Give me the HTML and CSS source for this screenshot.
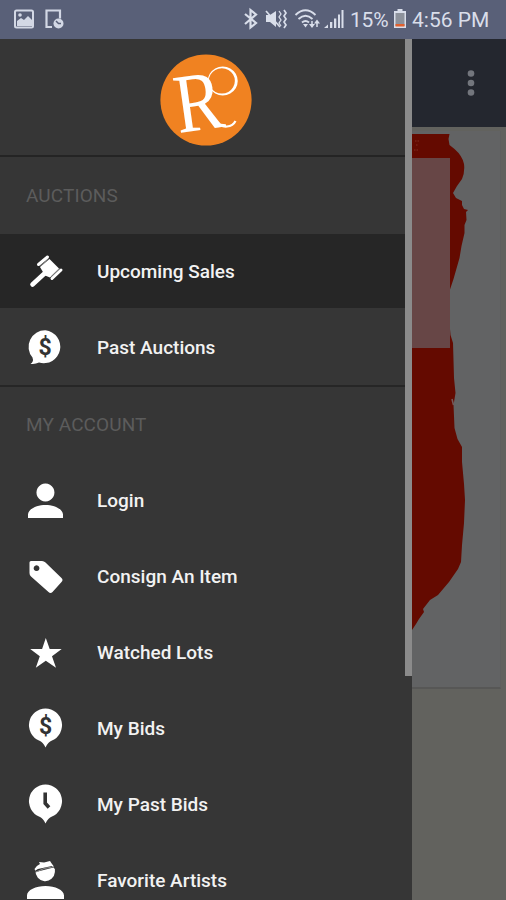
FILE: index.html
```html
<!DOCTYPE html>
<html lang="en">
<head>
<meta charset="utf-8">
<title>Auctions menu</title>
<link rel="stylesheet" href="styles.css">
</head>
<body>
<div class="phone">
  <header class="status">
    <svg class="status-left" width="54" height="24" viewBox="12 7 54 24">
      <rect x="15" y="10.500" width="18" height="17" rx="1.500" fill="none" stroke="#d3d8e5" stroke-width="2"/>
      <path d="M17 26v-5l4-3 3 2 4-4 4 4v6z" fill="#d3d8e5"/><circle cx="20" cy="15" r="1.800" fill="#d3d8e5"/>
      <path d="M52 27h-5.500V10.500h13.500v8" fill="none" stroke="#d3d8e5" stroke-width="2.200"/>
      <circle cx="58.500" cy="23.500" r="5" fill="#d3d8e5"/><path d="M56 21l2.500 2.500H61" fill="none" stroke="#596078" stroke-width="1.500"/>
    </svg>
    <div class="status-right">
      <svg class="signals" width="102" height="24" viewBox="241 7 102 24">
        <g fill="none" stroke="#d9deea" stroke-width="2.200">
          <path d="M244 14l11 9-5.500 4.500V10L255 14.500 244 24"/>
          <path d="M283 10l2 3-2 3 2 3-2 3 2 3-2 3" stroke-width="1.700"/>
          <path d="M278 11l2 3-2 3 2 3-2 3 2 3" stroke-width="1.300"/>
          <path d="M265 11l14 16" stroke-width="1.700"/>
          <path d="M294.500 15q10-9.500 20 0M297.500 19q7-6.500 14 0M301 22.500q3.500-3 7 0" stroke-width="1.900"/>
          <path d="M311 21v6M316 21v6" stroke-width="1.500"/>
        </g>
        <g fill="#d9deea">
          <path d="M265 15h4l6-4v16l-6-5h-4zM302 24h5l-2.500 3.500zM308 24h6l-3 4zM313 23.500l3-4 3 4z"/>
          <path d="M323 28l4-3.500V28zM329 22h2.300v6H329zM333 18.500h2.300V28H333zM337 14.500h2V28h-2zM340.500 10h2v18h-2z"/>
        </g>
      </svg>
      <span class="percent">15%</span>
      <svg class="battery" width="14" height="20" viewBox="0 0 14 20">
        <path d="M4.500 0h5v2H13v17H1V2h3.500z" fill="#d9deea"/><path d="M2.500 4h9v13h-9z" fill="#8d929c"/><path d="M2.500 15h9v2.500h-9z" fill="#e0602f"/>
      </svg>
      <span class="clock">4:56 PM</span>
    </div>
  </header>

  <div class="body">
    <nav class="drawer">
      <div class="brand">
        <svg width="92" height="92" viewBox="160 54 92 92" role="img" aria-label="RO">
          <circle cx="206" cy="100" r="45.600" fill="#f08221"/>
          <text class="brand-letter" x="0" y="0" transform="translate(178.500 133) rotate(-8) scale(.86 1)">R</text>
          <path d="M214 119q7 8.500 13 7.500 6-.5 8.500-5.500" fill="none" stroke="#fff" stroke-width="2.200"/>
          <path fill-rule="evenodd" d="M222.700 66.500a15 14.500 0 1 0 .1 0zM221.900 68.200a13 12.700 0 1 1-.1 0z" fill="#fff"/>
        </svg>
      </div>

      <h2 class="heading">AUCTIONS</h2>
      <a class="item selected">
        <svg class="icon" viewBox="0 0 40 40"><path d="M7.500 33.500L20 22" stroke="#fff" stroke-width="4.600" stroke-linecap="round"/><path d="M15 16l9.500-8 9.500 9.500-9 9-5-2z" fill="#fff"/><path d="M13.500 13.500l9-7.500M27 27.500l9-8.500" stroke="#fff" stroke-width="3" stroke-linecap="round"/><path d="M15.300 15l8.200-7M26 25.500l8.500-8" stroke="#aaa" stroke-width=".7"/></svg>
        <span>Upcoming Sales</span>
      </a>
      <a class="item">
        <svg class="icon" viewBox="0 0 40 40"><path d="M20.500 3.300a16.500 16.500 0 1 1-6.500 32.200Q10 37.500 5.500 36.800 9 35 7.500 30.500A16.500 16.500 0 0 1 20.500 3.300z" fill="#fff"/><text class="dollar" x="20" y="27.500">$</text></svg>
        <span>Past Auctions</span>
      </a>

      <h2 class="heading ruled">MY ACCOUNT</h2>
      <a class="item">
        <svg class="icon" viewBox="0 0 40 40"><path d="M20.500 2.500a9 9 0 1 1-.1 0zM3 37v-3.500C3 28 12 24 20.500 24S38 28 38 33.500V37z" fill="#fff"/></svg>
        <span>Login</span>
      </a>
      <a class="item">
        <svg class="icon" viewBox="0 0 40 40"><path fill-rule="evenodd" d="M6 4H17q2 0 3.500 1.500l16 15.500q2 2 0 4L27.500 35q-2 2-4 0L6 19.500q-1.500-1.500-1.500-3.500V5.500Q4.500 4 6 4zM11.500 8.300a2.900 2.900 0 1 0 .1 0z" fill="#fff"/></svg>
        <span>Consign An Item</span>
      </a>
      <a class="item">
        <svg class="icon" viewBox="0 0 40 40"><path d="M20.800 5l3.900 11h12l-9.700 7.200 4 11.500-10.200-7-10 7 4-11.500L5.200 16h11.900z" fill="#fff"/></svg>
        <span>Watched Lots</span>
      </a>
      <a class="item">
        <svg class="icon" viewBox="0 0 40 40"><path d="M20.500-.5a16.700 16.700 0 0 1 6.500 32Q23 33 20.500 38.500 18 33 14 31.500a16.700 16.700 0 0 1 6.500-32z" fill="#fff"/><text class="dollar" x="20.500" y="25">$</text></svg>
        <span>My Bids</span>
      </a>
      <a class="item">
        <svg class="icon" viewBox="0 0 40 40"><path d="M20.500-.5a16.700 16.700 0 0 1 6.500 32Q23 33 20.500 38.500 18 33 14 31.500a16.700 16.700 0 0 1 6.500-32z" fill="#fff"/><path d="M20.200 7.500v10.800l3.800 4.200" fill="none" stroke="#333" stroke-width="3.600"/></svg>
        <span>My Past Bids</span>
      </a>
      <a class="item">
        <svg class="icon" viewBox="0 0 40 40"><path d="M10.500 9.500a9.700 10 0 0 0 19.400 1.500V8l-3-3-14 3zM9.500 8q2-3.500 5.500-5l-1-2 5 .5 6-1.500 2 3q2 1.500 1.500 3.500L11 11zM2 38v-3.500C2 29 11 25 20.500 25S39 29 39 34.500V38z" fill="#fff"/><path d="M11 11q8-4.500 16.500-5" fill="none" stroke="#999" stroke-width=".9"/></svg>
        <span>Favorite Artists</span>
      </a>
      <div class="scrollbar"></div>
    </nav>

    <main class="page">
      <div class="toolbar">
        <svg width="8" height="28" viewBox="0 0 8 28" fill="#73767d"><circle cx="4" cy="4.500" r="3.300"/><circle cx="4" cy="14" r="3.300"/><circle cx="4" cy="23.500" r="3.300"/></svg>
      </div>
      <div class="card">
        <svg width="88" height="556" viewBox="412 131 88 556">
          <path d="M412 134h37.500l-1 5 1 6 5 4q8 7 9.500 15 1 8-2 15l-5 7-4 7 3 5 6 3v4l2 4 4 1-2 2 .5 8-2 5v8l-3 13-2 12-6 21-5 15-1 13 2 16 1 12 2.500 8L454 378l1.500 15-2 12 1 23 3 11 4.500 8v15l2 22 1 16-1 23-2 22-1 17-3 7-9 13-11 13-8 5-7 9 1 3-5 7-3 5-4 6z" fill="#640a00"/>
          <path d="M412 158h38v190h-38z" fill="#674646"/>
          <path d="M415 141h4M416 145h2M414 150h5" stroke="#802c20" stroke-dasharray="1.500 1"/>
          <path d="M452 399l1.500 6" stroke="#755c5c" stroke-width="1.500"/>
        </svg>
      </div>
    </main>
  </div>
</div>
</body>
</html>
```
FILE: styles.css
```css
* { box-sizing: border-box; }
body { margin: 0; font-family: Roboto, "Liberation Sans", sans-serif; }
.phone { width: 506px; height: 900px; overflow: hidden; display: flex; flex-direction: column; }
.status { height: 39px; flex: none; background: #596078; display: flex; justify-content: space-between; padding: 7px 14px 0 12px; color: #d9deea; }
.status-right { display: flex; align-items: flex-start; }
.signals { margin-right: 6px; }
.percent, .clock { font-size: 21px; line-height: 26px; white-space: nowrap; }
.percent { width: 39px; letter-spacing: -0.2px; }
.battery { margin: 2px 5px 0 4px; }
.clock { width: 80px; }
.body { display: flex; height: 861px; }
.drawer { position: relative; width: 412px; flex: none; background: #363636; overflow: hidden; }
.brand { height: 118px; border-bottom: 2px solid #242424; padding-top: 15px; display: flex; justify-content: center; }
.brand svg { display: block; overflow: visible; }
.brand-letter { font-family: "Liberation Serif", serif; font-size: 84px; line-height: 1; fill: #fff; }
.heading { margin: 0; height: 76px; padding-left: 26px; font-size: 19px; font-weight: 400; line-height: 77px; letter-spacing: 0.1px; color: #5c5c5c; }
.ruled { height: 78px; border-top: 2px solid #262626; line-height: 75px; }
.item { height: 76px; display: flex; align-items: center; padding-left: 25px; color: #f2f2f2; font-size: 19px; font-weight: 500; border: solid transparent; border-width: 1px 0; background-clip: padding-box; }
.ruled ~ .item span { margin-top: -2px; }
.selected { background-color: #262626; }
.icon { width: 40px; height: 40px; margin-right: 32px; overflow: visible; fill: none; }
.dollar { font: 700 23px Roboto, sans-serif; fill: #333; text-anchor: middle; }
.scrollbar { position: absolute; top: 0; right: 0; width: 7px; height: 637px; background: #8b8b8b; }
.page { width: 94px; background: #62625e; }
.toolbar { height: 88px; background: #24272f; display: flex; align-items: center; justify-content: flex-end; padding-right: 31px; }
.card { margin-top: 4px; width: 89px; height: 558px; background: #626364; border-right: 1px solid #5f5f5e; border-bottom: 2px solid #575756; }
.card svg { display: block; }
```
